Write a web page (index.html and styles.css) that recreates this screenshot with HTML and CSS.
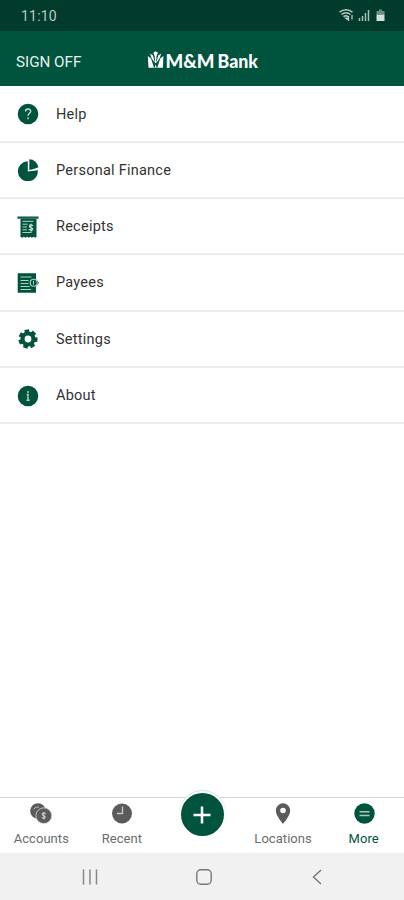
FILE: index.html
```
<!DOCTYPE html>
<html lang="en">
<head>
<meta charset="utf-8">
<meta name="viewport" content="width=device-width">
<title>M&amp;M Bank</title>
<link rel="stylesheet" href="styles.css">
</head>
<body>
<div class="status">
  <span class="time">11:10</span>
  <svg class="signals" width="50" height="16" viewBox="0 0 50 16">
    <g fill="none" stroke="#b7cbc4" stroke-width="1.5">
      <path d="M1.5 4.2Q8 -.5 14.500 4.200M3.500 6.500Q8 3 12.500 6.500M5.500 8.700Q8 6.800 10 8.700"/>
      <path d="M10.500 8v5M14 7v4.500" stroke-width="1.300"/>
    </g>
    <path d="M6 9.500h4v2.500H9z" fill="#b7cbc4"/>
    <path d="M21.500 10v3M24.500 8v5M27.500 5v8M30.500 2v11" stroke="#a6beb5" stroke-width="1.500"/>
    <path d="M41 1.500h3v1.500h2.500v3.500h-8V3H41z" fill="#6d8f83"/>
    <path d="M38.500 6.500h8V13h-8z" fill="#d5e0dc"/>
  </svg>
</div>
<header class="header">
  <span class="signoff">SIGN OFF</span>
  <svg class="logo" width="118" height="30" viewBox="0 -2 118 30">
    <g fill="#fff">
      <path d="M.800 6L4 8.500L7 17.800H1.500zM3 3.500L6 5.500L7.900 13L4.500 8zM6.300 2.800L8.600 1.300L11 2.800L9.500 6L9.200 13H8.100L7.700 6zM14.200 3.500L11.200 5.500L9.400 13L12.700 8zM16.400 6L13.200 8.500L10.300 17.800H15.900zM7.500 17.800L8.650 14.500L9.800 17.800z"/>
      <text class="logo-text" x="18.500" y="17.700" textLength="49" lengthAdjust="spacingAndGlyphs">M&amp;M</text>
      <text class="logo-text" x="70.500" y="17.700" textLength="40.500" lengthAdjust="spacingAndGlyphs">Bank</text>
    </g>
  </svg>
</header>
<main class="menu">
  <div class="row">
    <svg class="icon" viewBox="0 0 22 22"><circle cx="11" cy="11" r="10.300" fill="#00543d"/><path d="M8.500 8.500C8.500 5.200 13.700 5.300 13.700 8.300C13.700 10.300 11 10.400 11 12.700M11 14.500v1.700" fill="none" stroke="#c9ddd5" stroke-width="1.400"/></svg>
    <span>Help</span>
  </div>
  <div class="row">
    <svg class="icon" viewBox="0 0 22 22"><path d="M10.800 2.300V12.500L20.800 11.200A10 10 0 1 1 10.800 2.300z" fill="#00543d"/><path d="M12.300 .300A9.500 9.500 0 0 1 21.500 8.300L16 10.200L12.300 11z" fill="#00543d"/></svg>
    <span>Personal Finance</span>
  </div>
  <div class="row">
    <svg class="icon" viewBox="0 0 22 22"><path d="M.500 .500h21v2.200H19.500V21l-1.500 .700-1.500-1-1.600 1-1.600-1-1.600 1-1.600-1-1.600 1-1.600-1-1.500 1-1.900-.700V2.700H.500z" fill="#00543d"/><path d="M2 2.200h18" stroke="#86aa9c" stroke-width=".6"/><path d="M5.500 5.300h11M5.500 8.200h5M5.500 11h4.500M5.500 13.800h4.500M5.500 16.500h9" stroke="#b5cfc5" stroke-width="1"/><path d="M16 9.700C14 8 12 9 12.500 10.500S16.300 12 15.600 13.500S12.500 14.200 11.800 13.200M14 7.700v8" fill="none" stroke="#c4d9d1" stroke-width="1.200"/></svg>
    <span>Receipts</span>
  </div>
  <div class="row">
    <svg class="icon" viewBox="0 0 22 22"><path d="M.700 1.200H19V7l3 3.700-3 3.700v6.400H.700z" fill="#00543d"/><path d="M3.500 5h11M3.500 8.500h8M3.500 11.500h8M3.500 14.500h9M3.500 17.500h10.500" stroke="#b5cfc5" stroke-width="1.100"/><circle cx="16.700" cy="10.800" r="3.500" fill="#00543d" stroke="#b5cfc5" stroke-width="1.100"/><path d="M16.500 8.900v3.600" stroke="#b5cfc5"/></svg>
    <span>Payees</span>
  </div>
  <div class="row">
    <svg class="icon" viewBox="0 0 22 22"><circle cx="11" cy="11" r="5.500" fill="none" stroke="#00543d" stroke-width="4.200"/><g stroke="#00543d" stroke-width="4.600"><path d="M11 5V1.500" transform="rotate(-8 11 11)"/><path d="M11 5V1.500" transform="rotate(43.400 11 11)"/><path d="M11 5V1.500" transform="rotate(94.900 11 11)"/><path d="M11 5V1.500" transform="rotate(146.300 11 11)"/><path d="M11 5V1.500" transform="rotate(197.700 11 11)"/><path d="M11 5V1.500" transform="rotate(249.100 11 11)"/><path d="M11 5V1.500" transform="rotate(300.600 11 11)"/></g></svg>
    <span>Settings</span>
  </div>
  <div class="row">
    <svg class="icon" viewBox="0 0 22 22"><circle cx="11" cy="11" r="10.300" fill="#00543d"/><path d="M9.700 9.500H11V15M9.500 15.200h3.200M11 6v2" fill="none" stroke="#b5cfc5" stroke-width="1.400"/></svg>
    <span>About</span>
  </div>
</main>
<nav class="tabs">
  <div class="tab">
    <svg width="24" height="24" viewBox="0 0 24 24"><circle cx="9" cy="9" r="7.800" fill="#5b5b5b"/><path d="M4.500 7Q7 4.500 10 5" fill="none" stroke="#bbb" stroke-width="1"/><circle cx="14.800" cy="13.700" r="7.900" fill="#5b5b5b" stroke="#ddd" stroke-width=".8"/><path d="M16.800 11.600C14.500 10.200 12.800 11.300 13.400 12.800S16.800 14 16.100 15.500S13.500 16.300 12.900 15.300M14.900 10v7.500" fill="none" stroke="#ccc" stroke-width="1.100"/></svg>
    <span>Accounts</span>
  </div>
  <div class="tab">
    <svg width="24" height="24" viewBox="0 0 24 24"><circle cx="12" cy="11.500" r="10" fill="#5b5b5b"/><path d="M12.500 4.500v7H7" fill="none" stroke="#c8c8c8" stroke-width="1.400"/></svg>
    <span>Recent</span>
  </div>
  <div class="tab add-slot">
    <div class="add"><svg width="18" height="18" viewBox="0 0 18 18"><path d="M9 .500v17M.500 9h17" stroke="#fff" stroke-width="2.500"/></svg></div>
  </div>
  <div class="tab">
    <svg width="24" height="24" viewBox="0 0 24 24"><path d="M12 1.300A7.200 7.200 0 0 0 4.800 8.500C4.800 14 12 21.800 12 21.800S19.200 14 19.200 8.500A7.200 7.200 0 0 0 12 1.300zM12 5.700a2.800 2.800 0 1 1 0 5.600a2.800 2.800 0 0 1 0-5.600z" fill="#5b5b5b" fill-rule="evenodd"/></svg>
    <span>Locations</span>
  </div>
  <div class="tab active">
    <svg width="24" height="24" viewBox="0 0 24 24"><circle cx="12.500" cy="11.500" r="10.200" fill="#00543d"/><path d="M7.500 9.700h10M7.500 13.500h10" stroke="#a8c9bc" stroke-width="1.500"/></svg>
    <span>More</span>
  </div>
</nav>
<div class="system">
  <svg width="16" height="16" viewBox="0 0 16 16"><path d="M1.500 .500v15M8 .500v15M14.500 .500v15" stroke="#888" stroke-width="1.500"/></svg>
  <svg width="16" height="16" viewBox="0 0 16 16"><rect x=".8" y=".8" width="14.400" height="14.400" rx="4" fill="none" stroke="#777" stroke-width="1.400"/></svg>
  <svg width="16" height="16" viewBox="0 0 16 16"><path d="M12 1L4.500 8L12 15" fill="none" stroke="#777" stroke-width="1.400"/></svg>
</div>
</body>
</html>
```
FILE: styles.css
```
* { box-sizing: border-box; }
body {
  margin: 0;
  width: 404px;
  height: 900px;
  display: flex;
  flex-direction: column;
  overflow: hidden;
  background: #fff;
  font-family: Roboto, sans-serif;
}
svg { display: block; flex: none; }
.status {
  height: 31px;
  flex: none;
  display: flex;
  align-items: center;
  justify-content: space-between;
  padding: 1px 16px 0 21px;
  background: #003b2b;
}
.time { font-size: 14px; color: #b9cac4; letter-spacing: .2px; }
.header {
  height: 55px;
  flex: none;
  display: flex;
  align-items: center;
  padding: 6px 16px 0;
  background: #00543d;
}
.signoff { width: 131px; font-size: 15.2px; color: #e6f0ec; }
.logo { margin-top: 2px; overflow: visible; }
.logo-text { font: 900 18px Lato, sans-serif; }
.menu { flex: 1; padding-top: .4px; }
.row {
  height: 56.3px;
  display: flex;
  align-items: center;
  gap: 17px;
  padding: 1px 17px 0;
  border-bottom: 2px solid #ececec;
  font-size: 14.5px;
  letter-spacing: .25px;
  color: #333;
}
.icon { width: 22px; height: 22px; }
.tabs {
  height: 56px;
  flex: none;
  display: grid;
  grid-template-columns: repeat(5, 1fr);
  padding-left: 1px;
  border-top: 1px solid #d6d6d6;
}
.tab {
  display: flex;
  flex-direction: column;
  align-items: center;
  gap: 5px;
  padding-top: 4px;
  font-size: 13px;
  line-height: 15px;
  letter-spacing: .05px;
  color: #6c6c6c;
}
.active { color: #00543d; }
.add-slot { padding-top: 0; }
.add {
  width: 47px;
  height: 47px;
  flex: none;
  margin-top: -7px;
  display: flex;
  align-items: center;
  justify-content: center;
  border: 2px solid #fff;
  border-radius: 50%;
  background: #00543d;
  box-shadow: 0 -1px 1px 0 #ddd;
}
.system {
  height: 47px;
  flex: none;
  display: flex;
  align-items: center;
  justify-content: space-between;
  padding: 0 79px 0 82px;
  background: #f1f1f1;
}
```
